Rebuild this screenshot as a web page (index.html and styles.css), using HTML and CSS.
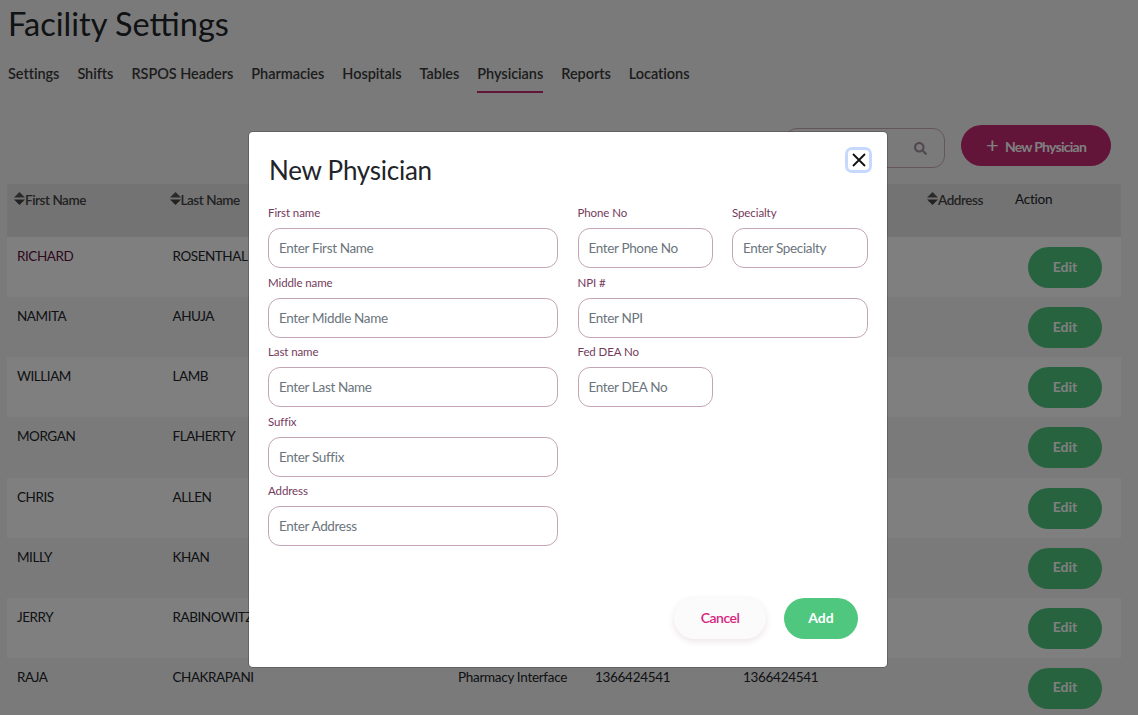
FILE: index.html
```html
<!DOCTYPE html>
<html lang="en">
<head>
    <meta charset="UTF-8">
    <title>Facility Settings</title>
    <link rel="stylesheet" href="styles.css">
</head>
<body>

    <h1 class="page-title">Facility Settings</h1>

    <!-- tabs -->
    <nav class="tabs">
        <a class="tab">Settings</a>
        <a class="tab">Shifts</a>
        <a class="tab">RSPOS Headers</a>
        <a class="tab">Pharmacies</a>
        <a class="tab">Hospitals</a>
        <a class="tab">Tables</a>
        <a class="tab tab-active">Physicians</a>
        <a class="tab">Reports</a>
        <a class="tab">Locations</a>
    </nav>

    <!-- search and add -->
    <div class="toolbar">
        <div class="search">
            <svg class="search-icon" viewBox="0 0 512 512"><path d="M505 442.700L405.300 343c-4.500-4.500-10.600-7-17-7H372c27.600-35.300 44-79.700 44-128C416 93.100 322.900 0 208 0S0 93.100 0 208s93.100 208 208 208c48.300 0 92.700-16.400 128-44v16.300c0 6.400 2.500 12.500 7 17l99.700 99.700c9.400 9.400 24.600 9.400 33.900 0l28.300-28.300c9.400-9.400 9.400-24.600.1-34zM208 336c-70.700 0-128-57.200-128-128 0-70.700 57.200-128 128-128 70.700 0 128 57.200 128 128 0 70.700-57.200 128-128 128z"/></svg>
        </div>
        <button class="btn btn-new"><span class="plus">+</span>New Physician</button>
    </div>

    <!-- physicians -->
    <div class="table">
        <div class="row row-head">
            <div class="cell col-first"><svg class="sort" viewBox="0 0 11 13"><path d="M5.500 0L11 5.500H0z"/><path class="sort-down" d="M5.500 13L0 7.500h11z"/></svg>First Name</div>
            <div class="cell col-last"><svg class="sort" viewBox="0 0 11 13"><path d="M5.500 0L11 5.500H0z"/><path class="sort-down" d="M5.500 13L0 7.500h11z"/></svg>Last Name</div>
            <div class="cell col-type"></div>
            <div class="cell col-phone"></div>
            <div class="cell col-fax"></div>
            <div class="cell col-address"><svg class="sort" viewBox="0 0 11 13"><path d="M5.500 0L11 5.500H0z"/><path class="sort-down" d="M5.500 13L0 7.500h11z"/></svg>Address</div>
            <div class="cell col-action head-action">Action</div>
        </div>
        <div class="row row-odd">
            <div class="cell col-first text-maroon">RICHARD</div><div class="cell col-last">ROSENTHAL</div><div class="cell col-type"></div><div class="cell col-phone"></div><div class="cell col-fax"></div><div class="cell col-address"></div><div class="cell col-action"><button class="btn btn-edit">Edit</button></div>
        </div>
        <div class="row">
            <div class="cell col-first">NAMITA</div><div class="cell col-last">AHUJA</div><div class="cell col-type"></div><div class="cell col-phone"></div><div class="cell col-fax"></div><div class="cell col-address"></div><div class="cell col-action"><button class="btn btn-edit">Edit</button></div>
        </div>
        <div class="row row-odd">
            <div class="cell col-first">WILLIAM</div><div class="cell col-last">LAMB</div><div class="cell col-type"></div><div class="cell col-phone"></div><div class="cell col-fax"></div><div class="cell col-address"></div><div class="cell col-action"><button class="btn btn-edit">Edit</button></div>
        </div>
        <div class="row">
            <div class="cell col-first">MORGAN</div><div class="cell col-last">FLAHERTY</div><div class="cell col-type"></div><div class="cell col-phone"></div><div class="cell col-fax"></div><div class="cell col-address"></div><div class="cell col-action"><button class="btn btn-edit">Edit</button></div>
        </div>
        <div class="row row-odd">
            <div class="cell col-first">CHRIS</div><div class="cell col-last">ALLEN</div><div class="cell col-type"></div><div class="cell col-phone"></div><div class="cell col-fax"></div><div class="cell col-address"></div><div class="cell col-action"><button class="btn btn-edit">Edit</button></div>
        </div>
        <div class="row">
            <div class="cell col-first">MILLY</div><div class="cell col-last">KHAN</div><div class="cell col-type"></div><div class="cell col-phone"></div><div class="cell col-fax"></div><div class="cell col-address"></div><div class="cell col-action"><button class="btn btn-edit">Edit</button></div>
        </div>
        <div class="row row-odd">
            <div class="cell col-first">JERRY</div><div class="cell col-last">RABINOWITZ</div><div class="cell col-type"></div><div class="cell col-phone"></div><div class="cell col-fax"></div><div class="cell col-address"></div><div class="cell col-action"><button class="btn btn-edit">Edit</button></div>
        </div>
        <div class="row">
            <div class="cell col-first">RAJA</div><div class="cell col-last">CHAKRAPANI</div><div class="cell col-type">Pharmacy Interface</div><div class="cell col-phone">1366424541</div><div class="cell col-fax">1366424541</div><div class="cell col-address"></div><div class="cell col-action"><button class="btn btn-edit">Edit</button></div>
        </div>
    </div>

    <!-- new physician dialog -->
    <div class="backdrop">
        <div class="modal">
            <button class="modal-close">
                <svg viewBox="0 0 14 14"><path d="M1 1l12 12M13 1L1 13"/></svg>
            </button>
            <h2 class="modal-title">New Physician</h2>

            <div class="form-grid">
                <div class="field col-wide"><label>First name</label><input type="text" placeholder="Enter First Name"></div>
                <div class="field"><label>Phone No</label><input type="text" placeholder="Enter Phone No"></div>
                <div class="field"><label>Specialty</label><input type="text" placeholder="Enter Specialty"></div>

                <div class="field col-wide"><label>Middle name</label><input type="text" placeholder="Enter Middle Name"></div>
                <div class="field span-two"><label>NPI #</label><input type="text" placeholder="Enter NPI"></div>

                <div class="field col-wide"><label>Last name</label><input type="text" placeholder="Enter Last Name"></div>
                <div class="field"><label>Fed DEA No</label><input type="text" placeholder="Enter DEA No"></div>
                <div></div>

                <div class="field col-wide"><label>Suffix</label><input type="text" placeholder="Enter Suffix"></div>
                <div></div>
                <div></div>

                <div class="field col-wide"><label>Address</label><input type="text" placeholder="Enter Address"></div>
            </div>

            <div class="modal-actions">
                <button class="btn btn-cancel">Cancel</button>
                <button class="btn btn-add">Add</button>
            </div>
        </div>
    </div>

</body>
</html>
```

FILE: styles.css
```css
* { box-sizing: border-box; }
html, body { height: 100%; }
body { margin: 0; height: 715px; overflow: hidden; background: #f4f4f4; color: #212529; font-family: Lato, "Liberation Sans", sans-serif; font-size: 13.5px; letter-spacing: -0.3px; }

.page-title { margin: 0; padding: 4px 0 0 8px; height: 61px; font-size: 32.5px; line-height: 39px; font-weight: 400; letter-spacing: 0; }

.tabs { display: flex; gap: 18px; padding-left: 8px; height: 32px; }
.tab { height: 32px; padding-top: 4px; line-height: 18px; font-size: 14.5px; font-weight: 600; letter-spacing: -0.05px; color: #3a3a3a; }
.tab-active { border-bottom: 2px solid #c42872; }

.toolbar { display: flex; justify-content: flex-end; align-items: flex-start; gap: 16px; height: 41px; margin-top: 32px; padding-right: 27px; }
.search { width: 160px; height: 40px; margin-top: 3px; border: 1px solid #c9a9bb; border-radius: 12px; display: flex; align-items: center; justify-content: flex-end; padding-right: 17px; }
.search-icon { width: 13px; height: 13px; fill: #a58fa0; }

.btn { border: none; font-family: inherit; font-size: 14px; font-weight: 700; border-radius: 21px; height: 41px; padding: 0 0 3px; }
.btn-new { width: 150px; background: #c42872; color: #fff; letter-spacing: -0.75px; }
.plus { font-size: 22px; font-weight: 400; margin-right: 7px; vertical-align: -1px; }

.table { margin: 18px 17px 0 7px; }
.row { display: flex; height: 60.15px; }
.row-head { height: 53px; background: #e6e6e6; }
.row-odd { background: #fff; }
.cell { padding-top: 10px; padding-left: 10px; line-height: 18px; }
.row-head .cell { padding-top: 7px; padding-left: 7px; font-weight: 600; color: #444; font-size: 13.5px; letter-spacing: -0.45px; }
.col-first { width: 155.5px; letter-spacing: -0.45px; }
.col-last { width: 285.5px; letter-spacing: -0.45px; }
.col-type { width: 137px; }
.col-phone { width: 148px; }
.col-fax { width: 194px; }
.col-address { width: 88px; }
.row-head .col-address { padding-left: 0; }
.col-action { width: 106px; padding-left: 13px; }
.row-head .head-action { padding-top: 6px; padding-left: 0; font-weight: 400; letter-spacing: -0.25px; color: #212529; }
.text-maroon { color: #5e1040; }
.sort { width: 11px; height: 13px; fill: #555; vertical-align: 0; }
.sort-down { fill: #444; }
.btn-edit { width: 74px; background: #4fc77f; color: #fff; }
.row .col-action:not(.head-action) { padding-top: 10px; }

.backdrop { position: absolute; inset: 0; background: rgba(0, 0, 0, .5); }
.modal { position: absolute; left: 249px; top: 132px; width: 638px; height: 535px; background: #fff; border-radius: 4px; padding: 19px 19px; box-shadow: 0 0 0 1px rgba(0, 0, 0, .2); }
.modal-close { position: absolute; left: 599px; top: 18px; width: 21px; height: 20px; padding: 0; border: none; border-radius: 4px; background: #fff; box-shadow: 0 0 0 3px #c6d9fc; display: flex; align-items: center; justify-content: center; }
.modal-close svg { width: 14px; height: 14px; fill: none; stroke: #111; stroke-width: 1.8; }
.modal-title { margin: 0; padding-left: 1px; height: 55px; font-size: 26px; line-height: 38px; font-weight: 400; letter-spacing: -0.25px; color: #212529; }

.form-grid { display: grid; grid-template-columns: 290px 135px 136px; column-gap: 19.5px; grid-auto-rows: 69.5px; }
.field { display: flex; flex-direction: column; }
.field label { height: 22px; font-size: 11.5px; line-height: 14px; letter-spacing: -0.1px; color: #743a5c; }
.field input { height: 40px; border: 1px solid #c3a5b6; border-radius: 12px; padding: 0 10px; font-family: inherit; font-size: 13.5px; letter-spacing: -0.35px; outline: none; }
.field input::placeholder { color: #6c757d; opacity: 1; }
.span-two { grid-column: span 2; }

.modal-actions { position: absolute; right: 29px; bottom: 28px; display: flex; gap: 18px; }
.btn-cancel { width: 92px; background: #fcfbfc; color: #d6247f; font-weight: 600; letter-spacing: -0.5px; box-shadow: 0 2px 6px rgba(120, 60, 90, .15); }
.btn-add { width: 74px; background: #4fc77f; color: #fff; }
```
